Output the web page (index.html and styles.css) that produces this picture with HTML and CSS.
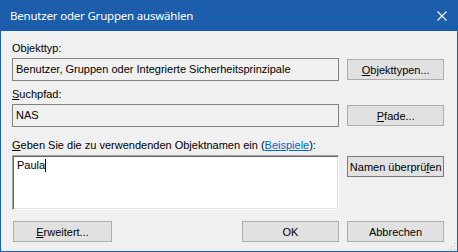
FILE: index.html
```
<!DOCTYPE html>
<html lang="de">
<head>
    <meta charset="UTF-8">
    <title>Benutzer oder Gruppen auswählen</title>
    <link rel="stylesheet" href="styles.css">
</head>
<body>
    <div class="window">
        <div class="titlebar">
            <span class="title">Benutzer oder Gruppen auswählen</span>
            <svg class="close" width="10" height="10" viewBox="0 0 10 10">
                <path d="M0.5 0.5 L9.5 9.5 M9.5 0.5 L0.5 9.5" stroke="#fff" stroke-width="1.1" fill="none"/>
            </svg>
        </div>
        <div class="content">
            <div class="label first">Objekttyp:</div>
            <div class="row">
                <div class="field">Benutzer, Gruppen oder Integrierte Sicherheitsprinzipale</div>
                <button class="btn"><u>O</u>bjekttypen...</button>
            </div>

            <div class="label"><u>S</u>uchpfad:</div>
            <div class="row">
                <div class="field">NAS</div>
                <button class="btn"><u>P</u>fade...</button>
            </div>

            <div class="label third"><u>G</u>eben Sie die zu verwendenden Objektnamen ein (<a href="#" class="link">Beispiele</a>):</div>
            <div class="row">
                <div class="names">Paula<span class="caret"></span></div>
                <button class="btn focused">Namen überprü<u>f</u>en</button>
            </div>

            <div class="footer">
                <button class="btn wide"><u>E</u>rweitert...</button>
                <div class="spacer"></div>
                <button class="btn">OK</button>
                <button class="btn">Abbrechen</button>
            </div>
        </div>
        <svg class="grip" width="7" height="7" viewBox="0 0 7 7">
            <rect x="5" y="0" width="1" height="1" fill="#b8b8b8"/>
            <rect x="2" y="3" width="1" height="1" fill="#b8b8b8"/>
            <rect x="5" y="3" width="1" height="1" fill="#b8b8b8"/>
            <rect x="0" y="6" width="1" height="1" fill="#b8b8b8"/>
            <rect x="2" y="6" width="1" height="1" fill="#b8b8b8"/>
            <rect x="5" y="6" width="1" height="1" fill="#b8b8b8"/>
        </svg>
    </div>
</body>
</html>
```
FILE: styles.css
```
/* Dialog window */
body {
    margin: 0;
    padding: 0;
    background: #f0f0f0;
    font-family: 'Liberation Sans', Arial, sans-serif;
    font-size: 11px;
    color: #000;
}

.window {
    position: relative;
    width: 458px;
    height: 252px;
    box-sizing: border-box;
    border: 1px solid #1c5eab;
    border-top: none;
    background: #f0f0f0;
    display: flex;
    flex-direction: column;
}

.titlebar {
    height: 31px;
    margin: 0 -1px;
    background: #1c5eab;
    color: #fff;
    display: flex;
    align-items: center;
    padding: 0 11px 0 10px;
}

.title {
    font-family: 'Segoe UI', 'Noto Sans', sans-serif;
    font-size: 11.5px;
    letter-spacing: -0.2px;
    flex: 1;
}

.content {
    padding: 11px 13px 0 11px;
    display: flex;
    flex-direction: column;
}

.label {
    height: 13px;
    line-height: 13px;
    margin: 7px 0 3px;
    white-space: nowrap;
}

.label.first {
    margin-top: 0;
}

.label.third {
    margin-top: 12px;
}

.link {
    color: #0066cc;
}

.row {
    display: flex;
    gap: 8px;
    align-items: flex-start;
}

.field {
    width: 329px;
    height: 23px;
    box-sizing: border-box;
    border: 1px solid #828282;
    padding: 0 3px;
    line-height: 21px;
    white-space: nowrap;
}

.names {
    width: 329px;
    height: 55px;
    box-sizing: border-box;
    background: #fff;
    border: 1px solid;
    border-color: #a0a0a0 #fff #fff #a0a0a0;
    box-shadow: inset 1px 1px 0 #696969, inset -1px -1px 0 #e3e3e3;
    padding: 3px 4px;
    line-height: 13px;
}

.caret {
    display: inline-block;
    width: 1px;
    height: 13px;
    background: #000;
    vertical-align: top;
}

.btn {
    width: 97px;
    height: 21px;
    margin-top: 1px;
    box-sizing: border-box;
    background: #e1e1e1;
    border: 1px solid #adadad;
    font-family: inherit;
    font-size: 11px;
    color: #000;
    padding: 0;
}

.btn.focused {
    border-color: #7a7a7a;
}

.btn.wide {
    width: 99px;
}

.footer {
    display: flex;
    gap: 8px;
    margin-top: 10px;
    padding-left: 1px;
}

.spacer {
    flex: 1;
}

.grip {
    position: absolute;
    right: 1px;
    bottom: 1px;
}
```
